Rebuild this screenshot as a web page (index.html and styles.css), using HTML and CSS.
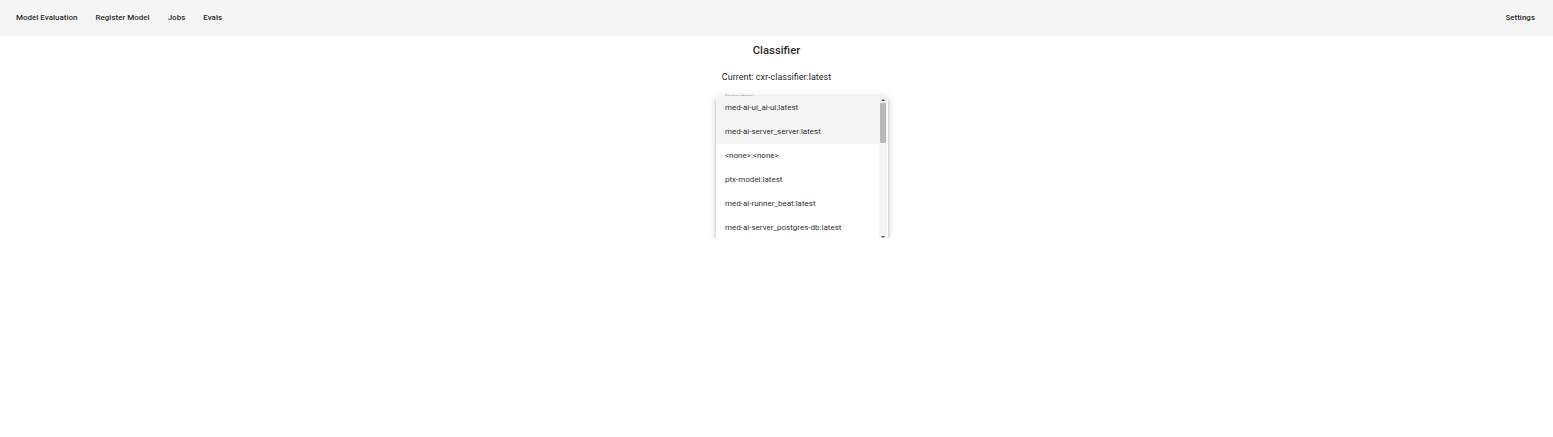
FILE: index.html
```html
<!DOCTYPE html>
<html>
<head>
<meta charset="utf-8">
<link rel="stylesheet" href="styles.css">
</head>
<body>
<header class="nav">
  <div class="nav-left">
    <a class="nav-link">Model Evaluation</a>
    <a class="nav-link">Register Model</a>
    <a class="nav-link">Jobs</a>
    <a class="nav-link">Evals</a>
  </div>
  <a class="nav-link">Settings</a>
</header>
<main class="content">
  <h2 class="title">Classifier</h2>
  <p class="current">Current: cxr-classifier:latest</p>
  <div class="field">
    <label class="field-label">Docker Image</label>
    <div class="menu">
      <ul class="menu-list">
        <li class="item active">med-ai-ui_ai-ui:latest</li>
        <li class="item active">med-ai-server_server:latest</li>
        <li class="item">&lt;none&gt;:&lt;none&gt;</li>
        <li class="item">ptx-model:latest</li>
        <li class="item">med-ai-runner_beat:latest</li>
        <li class="item">med-ai-server_postgres-db:latest</li>
      </ul>
      <div class="scrollbar">
        <div class="arrow up"></div>
        <div class="track"><div class="thumb"></div></div>
        <div class="arrow down"></div>
      </div>
    </div>
  </div>
</main>
</body>
</html>
```
FILE: styles.css
```css
* { box-sizing: border-box; }
html, body { margin: 0; padding: 0; background: #ffffff; }
body {
  font-family: Roboto, "Liberation Sans", Arial, sans-serif;
  color: rgba(0, 0, 0, 0.87);
}
.nav {
  height: 36px;
  background: #f5f5f5;
  display: flex;
  align-items: center;
  justify-content: space-between;
  padding: 0 18px 0 16px;
}
.nav-left { display: flex; align-items: center; gap: 18px; }
.nav-link {
  font-size: 8px;
  font-weight: 500;
  line-height: 10px;
  color: rgba(0, 0, 0, 0.87);
}
.content {
  display: flex;
  flex-direction: column;
  align-items: center;
}
.title {
  margin: 8px 0 0 0;
  font-size: 11.3px;
  font-weight: 500;
  line-height: 14px;
  color: rgba(0, 0, 0, 0.87);
}
.current {
  margin: 13px 0 0 0;
  font-size: 9px;
  line-height: 12px;
  color: rgba(0, 0, 0, 0.9);
}
.field {
  position: relative;
  width: 172px;
  height: 146px;
  margin: 9px 0 0 51px;
}
.field-label {
  position: absolute;
  left: 9px;
  top: 2px;
  font-size: 4.5px;
  line-height: 5px;
  color: rgba(0, 0, 0, 0.45);
}
.menu {
  position: absolute;
  left: 0;
  top: 4px;
  width: 172px;
  height: 144px;
  background: #fff;
  border-radius: 2px;
  box-shadow: 0 2px 3px -1px rgba(0,0,0,0.2), 0 3px 5px 0 rgba(0,0,0,0.14), 0 1px 8px 0 rgba(0,0,0,0.12);
  overflow: hidden;
  display: flex;
}
.menu-list {
  list-style: none;
  margin: 0;
  padding: 0;
  flex: 1;
  min-width: 0;
}
.item {
  height: 24px;
  line-height: 23px;
  padding: 0 9px;
  font-size: 8px;
  white-space: nowrap;
  color: rgba(0, 0, 0, 0.87);
}
.item.active { background: #f5f5f5; }
.scrollbar {
  width: 8px;
  margin-right: 1px;
  display: flex;
  flex-direction: column;
  background: #f3f3f3;
  background-image: radial-gradient(#dcdcdc 0.6px, transparent 0.7px);
  background-size: 2px 2px;
}
.arrow {
  height: 7px;
  display: flex;
  align-items: center;
  justify-content: center;
}
.arrow::before {
  content: "";
  width: 0;
  height: 0;
  border-left: 2px solid transparent;
  border-right: 2px solid transparent;
}
.arrow.up::before { border-bottom: 2px solid #505050; }
.arrow.down::before { border-top: 2px solid #505050; }
.track { flex: 1; padding: 0 1px; }
.thumb {
  height: 40px;
  background: #b9b9b9;
  background-image: radial-gradient(#d0d0d0 0.5px, transparent 0.6px);
  background-size: 2px 2px;
}
```
